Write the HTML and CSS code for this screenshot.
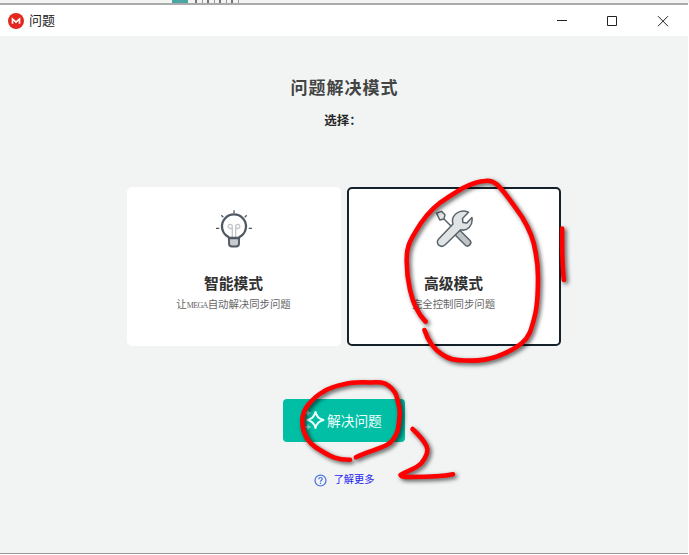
FILE: index.html
```
<!DOCTYPE html>
<html lang="zh-CN">
<head>
<meta charset="utf-8">
<title>问题</title>
<link rel="stylesheet" href="styles.css">
</head>
<body>
<div class="backdrop"><span class="backdrop-chip"></span><span class="backdrop-marks"></span></div>
<div class="window">
  <header class="titlebar">
    <svg class="logo" viewBox="0 0 16 16"><circle cx="8" cy="8" r="8" fill="#e3281f"/><path d="M4.500 10.700V6L8 9.200 11.500 6v4.700" fill="none" stroke="#fff" stroke-width="1.600"/></svg>
    <span class="titlebar-text">问题</span>
    <svg class="controls" viewBox="0 0 112 12" fill="none" stroke="#222" stroke-width="1"><path d="M0 5.500H10M50.500 1.500h9v9h-9zM101 1.200l10 10M111 1.200l-10 10"/></svg>
  </header>
  <main class="content">
    <h1 class="heading">问题解决模式</h1>
    <p class="prompt">选择：</p>
    <div class="modes">
      <section class="card">
        <svg class="card-icon" viewBox="0 0 40 40" fill="none" stroke="#4f5963" stroke-width="1.300">
          <path d="M20 1.200v3M7.300 6.300l2 2M32.700 6.300l-2 2M2 19.300h3.300M34.700 19.300H38"/>
          <path d="M18.300 28v-8.500h-1.800a2.100 2.100 0 1 1 1.800-2.200V20M21.700 28v-8.500h1.800a2.100 2.100 0 1 0-1.800-2.200V20" stroke="#c2c5c7" stroke-width="1.300"/>
          <path d="M15 29h10v5.500q0 3-3 3h-4q-3 0-3-3z" fill="#c8cbcc" stroke-width="1.900"/>
          <path d="M15 29c0-1-1-1.300-2.500-2.300a12 12 0 1 1 15 0C26 27.700 25 28 25 29z" stroke-width="2.300"/>
        </svg>
        <h2 class="card-title">智能模式</h2>
        <p class="card-text">让<span class="latin">MEGA</span>自动解决同步问题</p>
      </section>
      <section class="card card-selected">
        <svg class="card-icon" viewBox="0 0 40 40" fill="#e1e4e5" stroke="#59636c" stroke-width="1.500" stroke-linejoin="round">
          <path d="M2.500 4.200l5-1.800 3.500 3.400-1 4.200-4.200 1zM9.500 9.500l9 9" />
          <path d="M24.800 20.300l11 11c3 3-1.600 7.700-4.700 4.700l-11-11z" fill="#bfc4c7"/>
          <path d="M34.500 3.200l-6 6.200.4 4 4 .5 5-5.400c1.400 8-4.600 14.200-11.300 12.200L11.500 35.500c-4.500 4.500-11-.8-6.800-5.600L19 15C16.500 7 25-1 34.500 3.200z"/>
        </svg>
        <h2 class="card-title">高级模式</h2>
        <p class="card-text">完全控制同步问题</p>
      </section>
    </div>
    <button class="action">
      <svg class="sparkle" viewBox="0 0 20 20" fill="none" stroke="#f0fffb"><path d="M10.500 2Q12 8.500 18.500 10q-6.500 1.500-8 8Q9 11.500 2.500 10 9 8.500 10.500 2z" stroke-width="2" stroke-linejoin="round"/><path d="M3 .5v5M.5 3h5M3 14.500v5M.5 17h5" stroke-width="1.500" opacity=".7"/></svg>
      <span>解决问题</span>
    </button>
    <a class="more">
      <svg class="help" viewBox="0 0 14 14" fill="none" stroke="#456fe3" stroke-width="1.300"><circle cx="7" cy="7" r="5.900"/><path d="M5.200 5.700C5.200 3.100 9 3.200 8.900 5.500 8.900 6.800 7 6.700 7 8.400M7 9.500v1.200"/></svg>
      <span>了解更多</span>
    </a>
  </main>
</div>
<svg class="ink" viewBox="0 0 689 555">
  <path d="M425.500 321.500C417 313 413 303 410 290 407.500 279 406.500 270 406.700 259 406.700 246 410 240 421 223 428 213 437 204 447 198 453 194 458 191 463 188 473 183 479 181 485 181 490 180 494 182 497 184.500 505 192 513 204 522 217 530 230 534 241 535.500 252 537.500 262 538 268 538 277 538 292 538 305 534.500 317 531 331 529 337 522 343 515 349 506 353 497 356.500 487 360 478 361 467 360.500 456 361 449 359 443 355 433 349 428 341 424.500 330"/>
  <path d="M562.200 228.500c-.3 20 .3 38 1.600 51.500"/>
  <path d="M350 459.700C338 460 331 457 320 450 313 446 308 441 306 436.500 303 431 302 426 302.500 420 302.500 414 304 410 308 405 313 399 317 395 323 392 329 388 335 386 343 384.500 352 382 361 382 370 382.500 379 382 384 382 389 386 394 390 396 393 397 398 399 404 400 408 399.700 414 399 421 399 428 396.700 433 394 439 391 443 386.700 445 377 450 366 452 356 457.300"/>
  <path d="M412.500 429C419 435 424 441 426.500 446 429 451 427 456 421.500 463 416 469 407 471 400.500 475 402 477.500 407 477 413 477 426 477 440 477 453 474.300"/>
</svg>
</body>
</html>
```
FILE: styles.css
```
* { box-sizing: border-box; }
body {
  margin: 0;
  width: 689px;
  height: 555px;
  overflow: hidden;
  background: #fff;
  font-family: "Liberation Sans", "Noto Sans CJK SC", sans-serif;
}
.backdrop { display: flex; gap: 7px; height: 3px; padding-left: 172px; background: #f2f4f4; }
.backdrop-chip { width: 16px; height: 3px; background: #4aa5a3; }
.backdrop-marks {
  width: 47px;
  height: 3px;
  background: repeating-linear-gradient(90deg, #777 0 2px, transparent 2px 7px, #999 7px 8px, transparent 8px 12px);
}
.window {
  width: 688px;
  height: 551px;
  border-top: 2px solid #aaa;
  border-bottom: 1px solid #999;
  background: #f1f4f3;
}
.titlebar {
  display: flex;
  align-items: center;
  height: 31px;
  padding: 0 19px 0 8px;
  background: #fff;
}
.logo { width: 16px; height: 16px; margin-right: 5px; }
.titlebar-text { font-size: 13px; line-height: 18px; color: #222; }
.controls { width: 112px; height: 12px; margin-left: auto; }
.content { display: flex; flex-direction: column; align-items: center; }
.heading {
  margin: 41px 0 0 1px;
  font-size: 17px;
  font-weight: 700;
  line-height: 24px;
  letter-spacing: 1px;
  color: #444;
}
.prompt {
  margin: 11px 2px 0 0;
  font-size: 12.500px;
  font-weight: 700;
  line-height: 18px;
  color: #262626;
}
.modes { display: flex; gap: 6px; margin: 57px 0 0 -1px; }
.card {
  display: flex;
  flex-direction: column;
  align-items: center;
  width: 214px;
  height: 159px;
  padding-top: 22px;
  border-radius: 5px;
  background: #fff;
}
.card-selected { padding-top: 20px; border: 2px solid #14212b; }
.card-icon { width: 40px; height: 40px; }
.card-title {
  margin: 24px 0 0;
  font-size: 14.800px;
  font-weight: 700;
  line-height: 22px;
  color: #303030;
}
.card-text {
  margin: 0;
  font-size: 10.4px;
  line-height: 19px;
  color: #666;
}
.latin {
  display: inline-block;
  width: 21px;
  font: 8px "Liberation Serif", serif;
  letter-spacing: -.6px;
}
.action {
  display: flex;
  align-items: center;
  gap: 2px;
  width: 122px;
  height: 43px;
  margin: 53px 0 0;
  padding: 0 0 2px 22px;
  border: 0;
  border-radius: 4px;
  background: #00bfa5;
  color: #effffb;
  font: 400 13.7px/20px "Noto Sans CJK SC", sans-serif;
}
.sparkle { width: 20px; height: 20px; }
.more {
  display: flex;
  align-items: center;
  gap: 7px;
  margin-top: 29px;
  font-size: 10.2px;
  line-height: 18px;
  color: #2424ef;
}
.help { width: 13px; height: 13px; }
.ink {
  position: absolute;
  top: 0;
  left: 0;
  width: 689px;
  height: 555px;
  fill: none;
  stroke: #f00;
  stroke-width: 4.600;
  stroke-linecap: round;
  stroke-linejoin: round;
  filter: drop-shadow(2px 2px 2px rgba(0, 0, 0, .65));
  pointer-events: none;
}
```
